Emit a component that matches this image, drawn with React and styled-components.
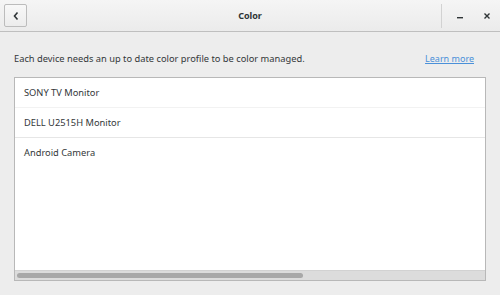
import React from "react";
import styled, { createGlobalStyle } from "styled-components";

const Global = createGlobalStyle`
  html, body { margin: 0; padding: 0; }
  body {
    width: 500px; height: 295px; overflow: hidden;
    background: #ededed;
    font-family: "Noto Sans", "Open Sans", sans-serif;
    color: #2e3436;
  }
`;

const Window = styled.div`
  width: 500px; height: 295px;
  display: flex; flex-direction: column;
  background: #ededed;
`;

const HeaderBar = styled.header`
  height: 31px;
  border-bottom: 1px solid #bfbfbf;
  background: linear-gradient(#f5f5f5, #ebebeb);
  display: flex; align-items: center;
  padding: 0 4px;
  position: relative;
  box-sizing: content-box;
`;

const BackButton = styled.button`
  width: 23px; height: 23px;
  box-sizing: border-box;
  border: 1px solid #bcbcbc;
  border-radius: 2px;
  background: linear-gradient(#f8f8f8, #ececec);
  display: flex; align-items: center; justify-content: center;
  padding: 0;
`;

const Title = styled.div`
  position: absolute; left: 0; right: 0; top: 0; bottom: 0;
  display: flex; align-items: center; justify-content: center;
  font-size: 9px; font-weight: 700; color: #2e3436;
  pointer-events: none;
`;

const Spacer = styled.div`flex: 1;`;

const Separator = styled.div`
  width: 1px; height: 24px; background: #d2d2d2;
  margin-right: 9px;
`;

const WinButton = styled.div`
  width: 18px; height: 20px;
  display: flex; align-items: center; justify-content: center;
  margin-left: ${p => p.$gap || 0}px;
`;

const Content = styled.main`
  flex: 1;
  padding: 19px 14px 14px 14px;
  display: flex; flex-direction: column;
`;

const InfoRow = styled.div`
  display: flex; justify-content: space-between; align-items: center;
  height: 14px;
  padding-right: 12px;
  font-size: 9.3px;
  color: #333739;
  margin-bottom: 12px;
`;

const Link = styled.a`
  color: #4a90d9;
  text-decoration: underline;
  font-size: 9px;
`;

const ListFrame = styled.div`
  flex: 1;
  border: 1px solid #b8b8b8;
  background: #ffffff;
  display: flex; flex-direction: column;
`;

const Rows = styled.div`flex: 1;`;

const Row = styled.div`
  height: 29px;
  display: flex; align-items: center;
  padding-left: 9px;
  font-size: 9.3px;
  color: #333739;
  border-bottom: 1px solid ${p => (p.$last ? "transparent" : p.$light ? "#f2f2f2" : "#e6e6e6")};
`;

const ScrollTrough = styled.div`
  height: 9px;
  background: #dcdcdc;
  border-top: 1px solid #d2d2d2;
  display: flex; align-items: center;
  padding-left: 2px;
`;

const ScrollThumb = styled.div`
  height: 5px; border-radius: 3px;
  background: #a8a8a8;
`;

export default function App() {
  const rows = ["SONY TV Monitor", "DELL U2515H Monitor", "Android Camera"];
  return (
    <Window>
      <Global />
      <HeaderBar>
        <BackButton>
          <svg width="8" height="10" viewBox="0 0 8 10">
            <path d="M5.5 1.5 L2.5 5 L5.5 8.5" fill="none" stroke="#2e3436" strokeWidth="1.6" />
          </svg>
        </BackButton>
        <Title>Color</Title>
        <Spacer />
        <Separator />
        <WinButton>
          <svg width="8" height="8" viewBox="0 0 8 8">
            <rect x="1" y="5" width="6" height="1.4" fill="#2e3436" />
          </svg>
        </WinButton>
        <WinButton $gap={9}>
          <svg width="8" height="8" viewBox="0 0 8 8">
            <path d="M1.5 1.5 L6.5 6.5 M6.5 1.5 L1.5 6.5" stroke="#2e3436" strokeWidth="1.4" />
          </svg>
        </WinButton>
      </HeaderBar>
      <Content>
        <InfoRow>
          <span>Each device needs an up to date color profile to be color managed.</span>
          <Link>Learn more</Link>
        </InfoRow>
        <ListFrame>
          <Rows>
            {rows.map((r, i) => (
              <Row key={r} $light={i === 0} $last={i === rows.length - 1}>{r}</Row>
            ))}
          </Rows>
          <ScrollTrough>
            <ScrollThumb style={{ width: "286px" }} />
          </ScrollTrough>
        </ListFrame>
      </Content>
    </Window>
  );
}
